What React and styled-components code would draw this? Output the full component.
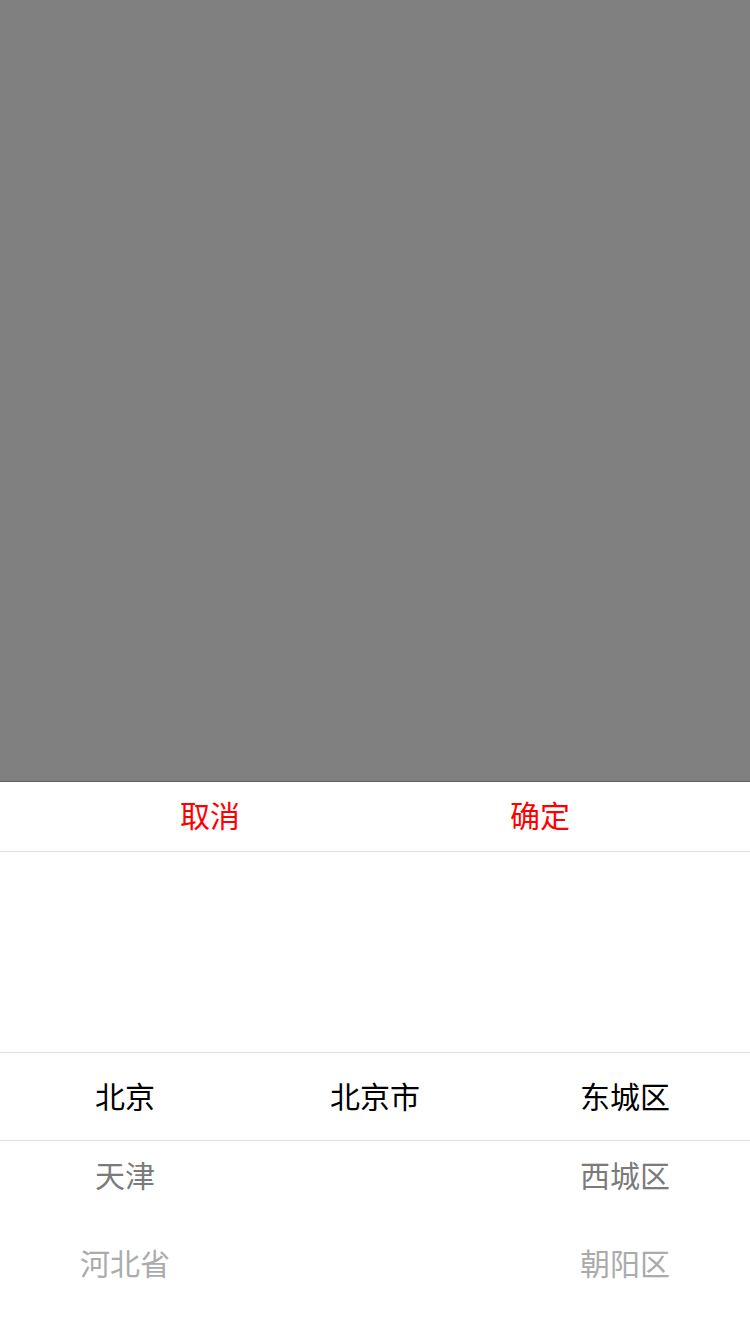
import React from 'react'
import styled, { createGlobalStyle } from 'styled-components'

const RED = '#ff0000'
const LINE = '#dedede'

const GlobalStyle = createGlobalStyle`
  html, body {
    margin: 0;
    padding: 0;
    background: #fff;
  }
  body {
    font-family: "Noto Sans CJK SC", "Noto Sans", sans-serif;
  }
`

const Screen = styled.div`
  width: 750px;
  height: 1334px;
  display: flex;
  flex-direction: column;
  overflow: hidden;
`

const Mask = styled.div`
  height: 782px;
  flex-shrink: 0;
  background-color: #808080;
  box-shadow: inset 0 -1px 0 #5e5e5e;
`

const Sheet = styled.div`
  flex: 1;
  display: flex;
  flex-direction: column;
  background: #fff;
`

const Toolbar = styled.div`
  height: 69px;
  padding: 0 45px;
  display: flex;
  align-items: center;
  border-bottom: 1px solid ${LINE};
`

const ToolButton = styled.div`
  flex: 1;
  text-align: center;
  color: ${RED};
  font-size: 30px;
  line-height: 65px;
  padding-bottom: 4px;
`

const Wheel = styled.div`
  flex: 1;
  position: relative;
  display: grid;
  grid-template-columns: repeat(3, 1fr);
  padding-top: 200px;
`

const Band = styled.div`
  position: absolute;
  left: 0;
  right: 0;
  top: 200px;
  height: 87px;
  border-top: 1px solid ${LINE};
  border-bottom: 1px solid ${LINE};
  pointer-events: none;
`

const Column = styled.div`
  display: flex;
  flex-direction: column;
`

const Item = styled.div`
  box-sizing: border-box;
  height: ${(p) => p.$h}px;
  padding-bottom: 4px;
  display: flex;
  align-items: center;
  justify-content: center;
  font-size: 30px;
  color: ${(p) => p.$color};
`

const rows = [
  { h: 89, color: '#000' },
  { h: 70, color: '#7b7b7b' },
  { h: 106, color: '#ababab' },
]

const columns = [
  ['北京', '天津', '河北省'],
  ['北京市'],
  ['东城区', '西城区', '朝阳区'],
]

const App = () => {
  return (
    <Screen>
      <GlobalStyle />
      <Mask />
      <Sheet>
        <Toolbar>
          <ToolButton>取消</ToolButton>
          <ToolButton>确定</ToolButton>
        </Toolbar>
        <Wheel>
          <Band />
          {columns.map((items, ci) => (
            <Column key={ci}>
              {items.map((label, i) => (
                <Item key={label} $h={rows[i].h} $color={rows[i].color}>
                  {label}
                </Item>
              ))}
            </Column>
          ))}
        </Wheel>
      </Sheet>
    </Screen>
  )
}

export default App
